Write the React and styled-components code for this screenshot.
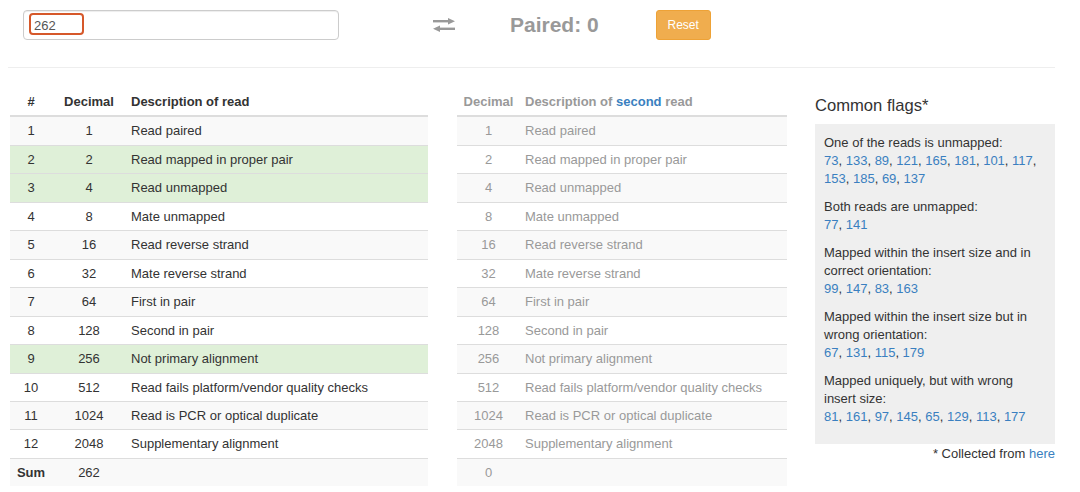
import React from "react";
import styled, { createGlobalStyle } from "styled-components";

const Global = createGlobalStyle`
  html, body { margin: 0; padding: 0; background: #fff; }
  body {
    font-family: "Liberation Sans", Arial, Helvetica, sans-serif;
    font-size: 13px;
    color: #333;
  }
  * { box-sizing: border-box; }
`;

const Page = styled.div`
  width: 1080px;
  height: 492px;
  overflow: hidden;
  padding-top: 10px;
`;

const Toolbar = styled.div`
  display: flex;
  align-items: center;
  height: 30px;
  padding-left: 23px;
`;

const InputWrap = styled.div`
  position: relative;
  width: 316px;
  height: 30px;
`;

const TextInput = styled.input`
  width: 100%;
  height: 100%;
  border: 1px solid #ccc;
  border-radius: 4px;
  box-shadow: inset 0 1px 1px rgba(0, 0, 0, 0.075);
  padding: 0 10px;
  font-family: inherit;
  font-size: 13px;
  color: #555;
  background: #fff;
  outline: none;
`;

const Highlight = styled.span`
  position: absolute;
  left: 6px;
  top: 3px;
  width: 55px;
  height: 22px;
  border: 2px solid #d6582a;
  border-radius: 4px;
  pointer-events: none;
`;

const SwapIcon = styled.svg`
  margin-left: 94px;
  flex: none;
`;

const Paired = styled.h3`
  margin: 0 0 0 55px;
  font-size: 21px;
  font-weight: bold;
  color: #999;
  line-height: 30px;
`;

const ResetButton = styled.button`
  margin-left: 57px;
  width: 55px;
  height: 30px;
  border: 1px solid #eea236;
  border-radius: 3px;
  background: #f0ad4e;
  color: #fff;
  font-family: inherit;
  font-size: 12px;
  padding: 0;
`;

const Rule = styled.hr`
  margin: 27px 25px 0 8px;
  border: 0;
  border-top: 1px solid #eee;
`;

const Content = styled.div`
  display: flex;
  align-items: flex-start;
  padding: 20px 0 0 10px;
`;

const Table = styled.table`
  width: ${(p) => p.$w}px;
  margin-right: ${(p) => p.$gap}px;
  border-collapse: collapse;
  color: ${(p) => (p.$muted ? "#999" : "#333")};
  flex: none;
`;

const Th = styled.th`
  padding: 5px 5px;
  line-height: 17.46px;
  font-weight: bold;
  text-align: ${(p) => (p.$left ? "left" : "center")};
  border-bottom: 2px solid #ddd;
  width: ${(p) => (p.$w ? p.$w + "px" : "auto")};
  white-space: nowrap;
`;

const Tr = styled.tr`
  background: ${(p) => (p.$success ? "#dff0d8" : p.$stripe ? "#f9f9f9" : "#fff")};
`;

const Td = styled.td`
  padding: 5px 5px;
  line-height: 17.46px;
  border-top: 1px solid #ddd;
  text-align: ${(p) => (p.$left ? "left" : "center")};
  font-weight: ${(p) => (p.$bold ? "bold" : "normal")};
  white-space: nowrap;
`;

const Accent = styled.span`
  color: #3a7fc0;
`;

const Sidebar = styled.div`
  width: 240px;
  flex: none;
`;

const SideTitle = styled.h4`
  margin: 8px 0 8px;
  font-size: 16.6px;
  font-weight: normal;
  line-height: 20px;
  color: #333;
`;

const Well = styled.div`
  background: #efefef;
  padding: 10px 9px 8px;
`;

const Para = styled.p`
  margin: 0 0 10px;
  line-height: 18px;
`;

const Link = styled.a`
  color: #3a7fc0;
  text-decoration: none;
`;

const Footnote = styled.div`
  text-align: right;
  line-height: 18px;
  margin-top: 1px;
`;

const rows = [
  [1, 1, "Read paired"],
  [2, 2, "Read mapped in proper pair", true],
  [3, 4, "Read unmapped", true],
  [4, 8, "Mate unmapped"],
  [5, 16, "Read reverse strand"],
  [6, 32, "Mate reverse strand"],
  [7, 64, "First in pair"],
  [8, 128, "Second in pair"],
  [9, 256, "Not primary alignment", true],
  [10, 512, "Read fails platform/vendor quality checks"],
  [11, 1024, "Read is PCR or optical duplicate"],
  [12, 2048, "Supplementary alignment"],
];

const flags = [
  ["One of the reads is unmapped:", [73, 133, 89, 121, 165, 181, 101, 117, 153, 185, 69, 137]],
  ["Both reads are unmapped:", [77, 141]],
  ["Mapped within the insert size and in correct orientation:", [99, 147, 83, 163]],
  ["Mapped within the insert size but in wrong orientation:", [67, 131, 115, 179]],
  ["Mapped uniquely, but with wrong insert size:", [81, 161, 97, 145, 65, 129, 113, 177]],
];

function Numbers({ list }) {
  return list.map((n, i) => (
    <React.Fragment key={n}>
      <Link href="#">{n}</Link>
      {i < list.length - 1 ? ", " : ""}
    </React.Fragment>
  ));
}

export default function App() {
  return (
    <>
      <Global />
      <Page>
        <Toolbar>
          <InputWrap>
            <TextInput defaultValue="262" readOnly />
            <Highlight />
          </InputWrap>
          <SwapIcon width="22" height="14" viewBox="0 0 22 14">
            <rect x="0" y="2" width="16" height="2.4" fill="#999" />
            <polygon points="15,0 22,3.2 15,6.4" fill="#999" />
            <rect x="6" y="9.6" width="16" height="2.4" fill="#999" />
            <polygon points="7,7.6 0,10.8 7,14" fill="#999" />
          </SwapIcon>
          <Paired>Paired: 0</Paired>
          <ResetButton>Reset</ResetButton>
        </Toolbar>
        <Rule />
        <Content>
          <Table $w={418} $gap={29}>
            <thead>
              <tr>
                <Th $w={42}>#</Th>
                <Th $w={74}>Decimal</Th>
                <Th $left>Description of read</Th>
              </tr>
            </thead>
            <tbody>
              {rows.map(([n, d, desc, ok], i) => (
                <Tr key={n} $stripe={i % 2 === 0} $success={ok}>
                  <Td>{n}</Td>
                  <Td>{d}</Td>
                  <Td $left>{desc}</Td>
                </Tr>
              ))}
              <Tr $stripe>
                <Td $bold>Sum</Td>
                <Td>262</Td>
                <Td $left></Td>
              </Tr>
            </tbody>
          </Table>
          <Table $w={330} $gap={28} $muted>
            <thead>
              <tr>
                <Th $w={63}>Decimal</Th>
                <Th $left>
                  Description of <Accent>second</Accent> read
                </Th>
              </tr>
            </thead>
            <tbody>
              {rows.map(([n, d, desc], i) => (
                <Tr key={n} $stripe={i % 2 === 0}>
                  <Td>{d}</Td>
                  <Td $left>{desc}</Td>
                </Tr>
              ))}
              <Tr $stripe>
                <Td>0</Td>
                <Td $left></Td>
              </Tr>
            </tbody>
          </Table>
          <Sidebar>
            <SideTitle>Common flags*</SideTitle>
            <Well>
              {flags.map(([label, list]) => (
                <Para key={label}>
                  {label}
                  <br />
                  <Numbers list={list} />
                </Para>
              ))}
            </Well>
            <Footnote>
              * Collected from <Link href="#">here</Link>
            </Footnote>
          </Sidebar>
        </Content>
      </Page>
    </>
  );
}
